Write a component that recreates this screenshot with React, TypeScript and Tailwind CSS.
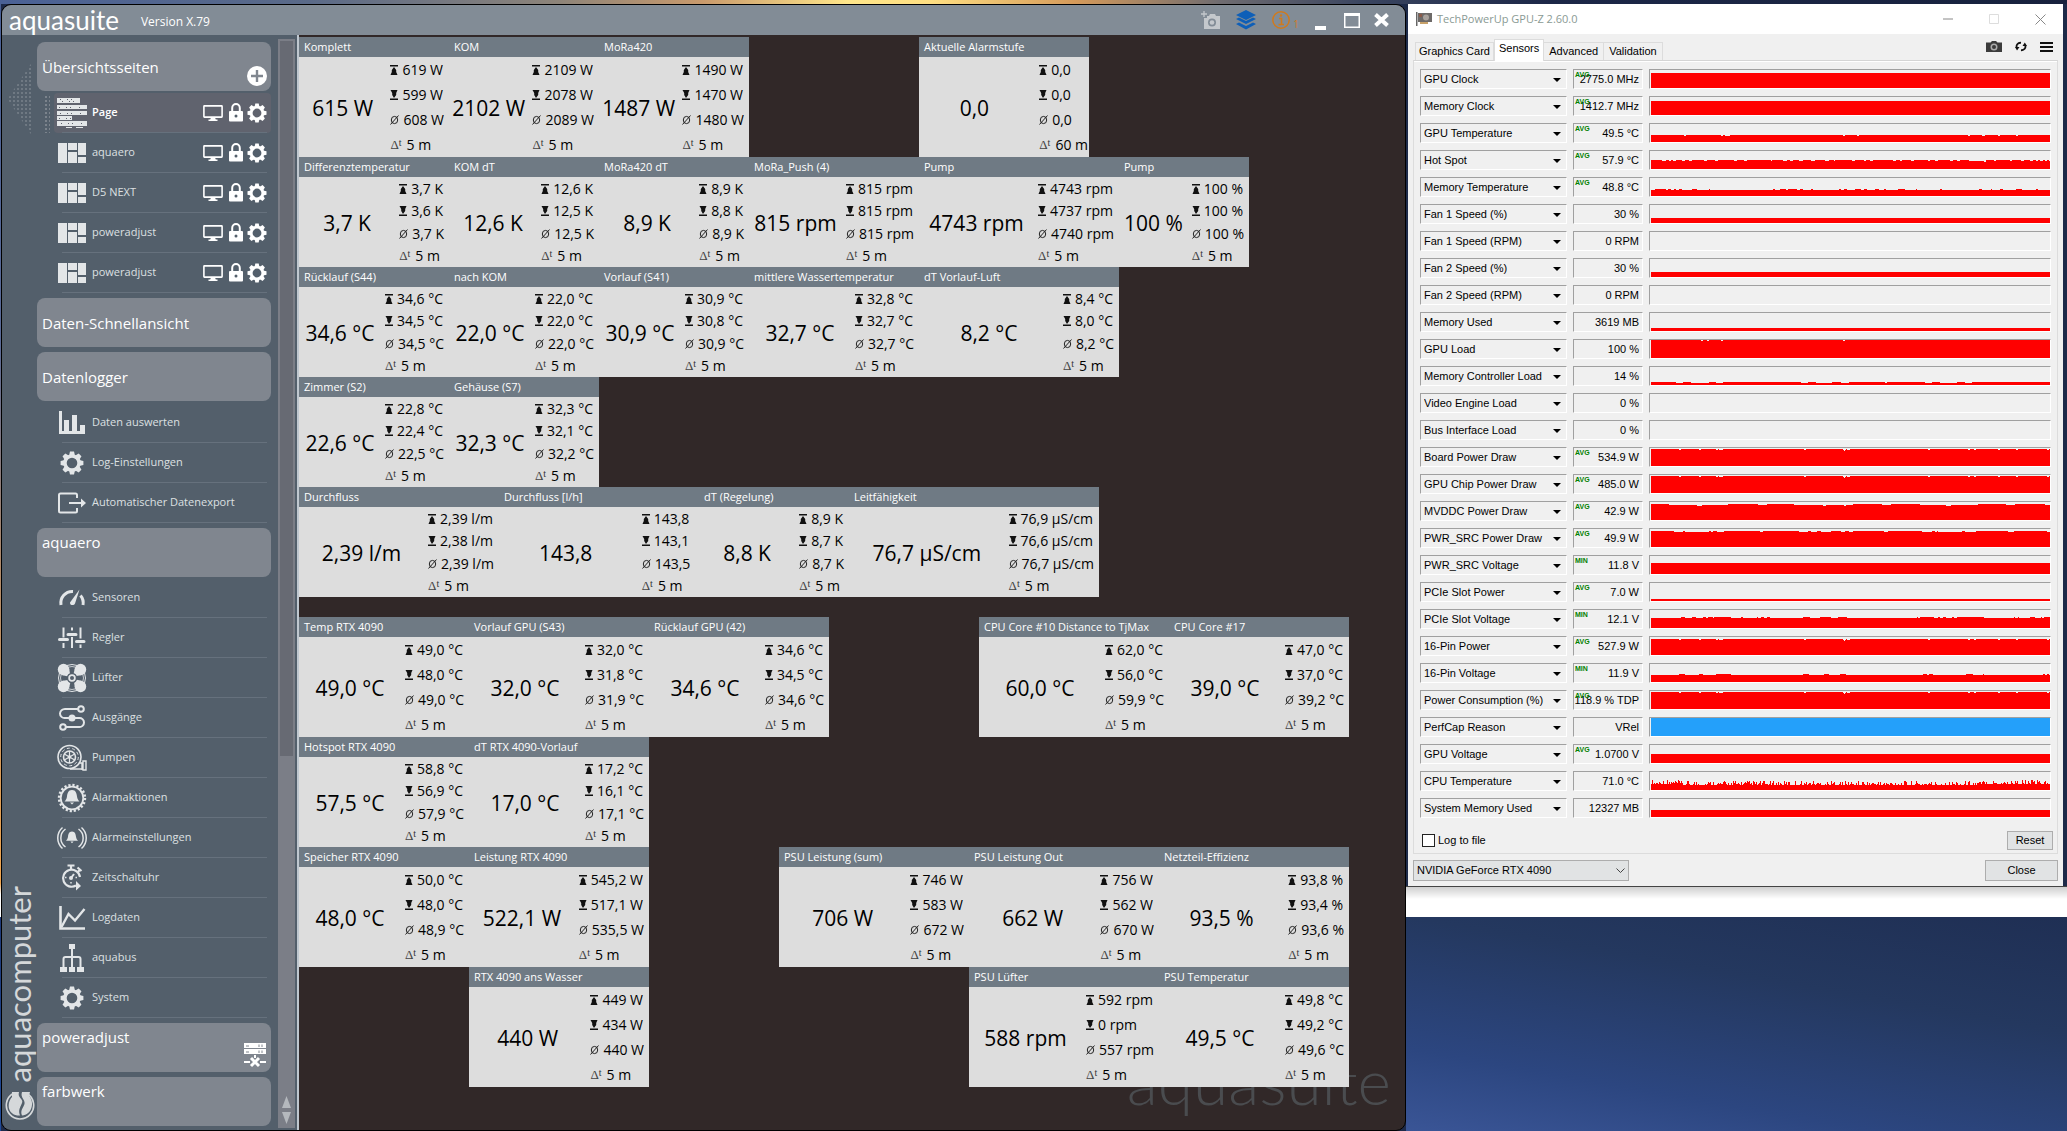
import type { ReactNode } from "react";

type NavEntry = { label: string; icon: ReactNode };

type Tile = {
    title: string;
    value: string;
    max: string;
    min: string;
    avg: string;
    span?: string;
    width: string;
    indent?: string;
};

type Sensor = {
    name: string;
    value: string;
    mode?: "AVG" | "MIN";
    height: number;
    // [x, width, offset] for the spots that differ from the base level
    marks?: [number, number, number][];
    noise?: boolean;
    color?: string;
};

const W2 = "w-[150px]";
const W3 = "w-[170px]";
const W4 = "w-[180px]";
const W5 = "w-[190px]";
const W6 = "w-[200px]";

const rows: { height: string; tiles: Tile[] }[] = [
    {
        height: "h-[100px]",
        tiles: [
            { title: "Komplett", value: "615 W", max: "619 W", min: "599 W", avg: "608 W", width: W2 },
            { title: "KOM", value: "2102 W", max: "2109 W", min: "2078 W", avg: "2089 W", width: W2 },
            { title: "MoRa420", value: "1487 W", max: "1490 W", min: "1470 W", avg: "1480 W", width: W2 },
            { title: "Aktuelle Alarmstufe", value: "0,0 ", max: "0,0 ", min: "0,0 ", avg: "0,0 ", span: "60 m", width: W3, indent: "ml-[170px]" },
        ],
    },
    {
        height: "h-[90px]",
        tiles: [
            { title: "Differenztemperatur", value: "3,7 K", max: "3,7 K", min: "3,6 K", avg: "3,7 K", width: W2 },
            { title: "KOM dT", value: "12,6 K", max: "12,6 K", min: "12,5 K", avg: "12,5 K", width: W2 },
            { title: "MoRa420 dT", value: "8,9 K", max: "8,9 K", min: "8,8 K", avg: "8,9 K", width: W2 },
            { title: "MoRa_Push (4)", value: "815 rpm", max: "815 rpm", min: "815 rpm", avg: "815 rpm", width: W3 },
            { title: "Pump", value: "4743 rpm", max: "4743 rpm", min: "4737 rpm", avg: "4740 rpm", width: W6 },
            { title: "Pump", value: "100 %", max: "100 %", min: "100 %", avg: "100 %", width: "w-[130px]" },
        ],
    },
    {
        height: "h-[90px]",
        tiles: [
            { title: "Rücklauf (S44)", value: "34,6 °C", max: "34,6 °C", min: "34,5 °C", avg: "34,5 °C", width: W2 },
            { title: "nach KOM", value: "22,0 °C", max: "22,0 °C", min: "22,0 °C", avg: "22,0 °C", width: W2 },
            { title: "Vorlauf (S41)", value: "30,9 °C", max: "30,9 °C", min: "30,8 °C", avg: "30,9 °C", width: W2 },
            { title: "mittlere Wassertemperatur", value: "32,7 °C", max: "32,8 °C", min: "32,7 °C", avg: "32,7 °C", width: W3 },
            { title: "dT Vorlauf-Luft", value: "8,2 °C", max: "8,4 °C", min: "8,0 °C", avg: "8,2 °C", width: W6 },
        ],
    },
    {
        height: "h-[90px]",
        tiles: [
            { title: "Zimmer (S2)", value: "22,6 °C", max: "22,8 °C", min: "22,4 °C", avg: "22,5 °C", width: W2 },
            { title: "Gehäuse (S7)", value: "32,3 °C", max: "32,3 °C", min: "32,1 °C", avg: "32,2 °C", width: W2 },
        ],
    },
    {
        height: "h-[90px] mb-5",
        tiles: [
            { title: "Durchfluss", value: "2,39 l/m", max: "2,39 l/m", min: "2,38 l/m", avg: "2,39 l/m", width: W6 },
            { title: "Durchfluss [l/h]", value: "143,8 ", max: "143,8 ", min: "143,1 ", avg: "143,5 ", width: W6 },
            { title: "dT (Regelung)", value: "8,8 K", max: "8,9 K", min: "8,7 K", avg: "8,7 K", width: W2 },
            { title: "Leitfähigkeit", value: "76,7 µS/cm", max: "76,9 µS/cm", min: "76,6 µS/cm", avg: "76,7 µS/cm", width: "w-[250px]" },
        ],
    },
    {
        height: "h-[100px]",
        tiles: [
            { title: "Temp RTX 4090", value: "49,0 °C", max: "49,0 °C", min: "48,0 °C", avg: "49,0 °C", width: W3 },
            { title: "Vorlauf GPU (S43)", value: "32,0 °C", max: "32,0 °C", min: "31,8 °C", avg: "31,9 °C", width: W4 },
            { title: "Rücklauf GPU (42)", value: "34,6 °C", max: "34,6 °C", min: "34,5 °C", avg: "34,6 °C", width: W4 },
            { title: "CPU Core #10 Distance to TjMax", value: "60,0 °C", max: "62,0 °C", min: "56,0 °C", avg: "59,9 °C", width: W5, indent: "ml-[150px]" },
            { title: "CPU Core #17", value: "39,0 °C", max: "47,0 °C", min: "37,0 °C", avg: "39,2 °C", width: W4 },
        ],
    },
    {
        height: "h-[90px]",
        tiles: [
            { title: "Hotspot RTX 4090", value: "57,5 °C", max: "58,8 °C", min: "56,9 °C", avg: "57,9 °C", width: W3 },
            { title: "dT RTX 4090-Vorlauf", value: "17,0 °C", max: "17,2 °C", min: "16,1 °C", avg: "17,1 °C", width: W4 },
        ],
    },
    {
        height: "h-[100px]",
        tiles: [
            { title: "Speicher RTX 4090", value: "48,0 °C", max: "50,0 °C", min: "48,0 °C", avg: "48,9 °C", width: W3 },
            { title: "Leistung RTX 4090", value: "522,1 W", max: "545,2 W", min: "517,1 W", avg: "535,5 W", width: W4 },
            { title: "PSU Leistung (sum)", value: "706 W", max: "746 W", min: "583 W", avg: "672 W", width: W5, indent: "ml-[130px]" },
            { title: "PSU Leistung Out", value: "662 W", max: "756 W", min: "562 W", avg: "670 W", width: W5 },
            { title: "Netzteil-Effizienz", value: "93,5 %", max: "93,8 %", min: "93,4 %", avg: "93,6 %", width: W5 },
        ],
    },
    {
        height: "h-[100px]",
        tiles: [
            { title: "RTX 4090 ans Wasser", value: "440 W", max: "449 W", min: "434 W", avg: "440 W", width: W4, indent: "ml-[170px]" },
            { title: "PSU Lüfter", value: "588 rpm", max: "592 rpm", min: "0 rpm", avg: "557 rpm", width: W5, indent: "ml-[320px]" },
            { title: "PSU Temperatur", value: "49,5 °C", max: "49,8 °C", min: "49,2 °C", avg: "49,6 °C", width: W5 },
        ],
    },
];

const powerDips: [number, number, number][] = [
    [28, 2, -1], [48, 2, -1], [65, 2, -1], [68, 4, -1], [153, 2, -1], [192, 3, -1], [193, 1, -2], [196, 3, -1],
    [278, 2, -1], [318, 2, -1], [324, 2, -1], [348, 2, -1], [366, 2, -1], [397, 2, -1],
];

const sensors: Sensor[] = [
    { name: "GPU Clock", value: "2775.0 MHz", mode: "AVG", height: 15 },
    { name: "Memory Clock", value: "1412.7 MHz", mode: "AVG", height: 14 },
    { name: "GPU Temperature", value: "49.5 °C", mode: "AVG", height: 7, marks: [[33, 2, -1], [70, 2, -1], [74, 5, -1], [192, 2, -1], [207, 2, -1], [318, 2, -1], [332, 3, -1], [348, 2, -1], [366, 2, -1]] },
    { name: "Hot Spot", value: "57.9 °C", mode: "AVG", height: 8, marks: [[0, 11, 1], [15, 3, 1], [20, 2, 1], [25, 6, 1], [34, 4, 1], [41, 12, 1], [56, 8, 1], [67, 16, 1], [86, 7, 1], [96, 2, 1], [98, 22, 1], [121, 11, 1], [136, 3, 1], [142, 6, 1], [152, 8, 1], [164, 10, 1], [178, 5, 1], [184, 18, 1], [205, 9, 1], [216, 4, 1], [223, 20, 1], [246, 4, 1], [252, 9, 1], [264, 14, 1], [280, 5, 1], [288, 12, 1], [303, 4, 1], [310, 9, 1], [334, 2, -1], [336, 8, 1], [346, 14, 1], [362, 9, 1], [374, 6, 1], [383, 3, 1], [388, 2, 1], [393, 2, 1], [397, 2, 1]] },
    { name: "Memory Temperature", value: "48.8 °C", mode: "AVG", height: 6, marks: [[4, 11, 1], [17, 3, 1], [23, 2, 1], [28, 3, 1], [41, 5, 1], [58, 1, 1], [122, 2, 1], [129, 6, 1], [137, 9, 1], [149, 3, 1], [160, 2, 1], [188, 2, 1], [193, 3, 1], [205, 6, 1], [214, 3, 1], [225, 4, 1], [234, 2, 1], [248, 7, 1], [266, 1, 1], [290, 2, 1], [329, 3, 1], [341, 1, 1], [350, 3, 1], [366, 6, 1], [386, 2, 1]] },
    { name: "Fan 1 Speed (%)", value: "30 %", height: 5 },
    { name: "Fan 1 Speed (RPM)", value: "0 RPM", height: 0 },
    { name: "Fan 2 Speed (%)", value: "30 %", height: 5 },
    { name: "Fan 2 Speed (RPM)", value: "0 RPM", height: 0 },
    { name: "Memory Used", value: "3619 MB", height: 3 },
    { name: "GPU Load", value: "100 %", height: 18, marks: [[50, 2, -1], [56, 2, -1], [70, 2, -1], [192, 2, -1]] },
    { name: "Memory Controller Load", value: "14 %", height: 3, marks: [[25, 7, -1], [40, 18, -1], [65, 7, -1], [150, 7, -1], [165, 16, -1], [190, 8, -1], [235, 2, -1], [275, 7, -1], [290, 17, -1], [315, 7, -1]] },
    { name: "Video Engine Load", value: "0 %", height: 0 },
    { name: "Bus Interface Load", value: "0 %", height: 0 },
    { name: "Board Power Draw", value: "534.9 W", mode: "AVG", height: 17, marks: powerDips },
    { name: "GPU Chip Power Draw", value: "485.0 W", mode: "AVG", height: 17, marks: powerDips },
    { name: "MVDDC Power Draw", value: "42.9 W", mode: "AVG", height: 16, marks: [[18, 28, -1], [46, 5, -2], [51, 26, -1], [107, 9, -1], [143, 29, -1], [172, 3, -2], [175, 18, -1], [193, 2, -2], [195, 8, -1], [232, 9, -1], [270, 26, -1], [296, 5, -2], [301, 27, -1], [356, 9, -1], [395, 5, -1]] },
    { name: "PWR_SRC Power Draw", value: "49.9 W", mode: "AVG", height: 16, marks: [[23, 9, -1], [34, 24, -1], [60, 2, -1], [66, 7, -1], [109, 3, -1], [148, 9, -1], [160, 6, -1], [170, 10, -1], [190, 4, -1], [198, 5, -1], [234, 4, -1], [272, 10, -1], [285, 2, -1], [288, 24, -1], [315, 11, -1], [358, 6, -1], [397, 3, -1]] },
    { name: "PWR_SRC Voltage", value: "11.8 V", mode: "MIN", height: 11 },
    { name: "PCIe Slot Power", value: "7.0 W", mode: "AVG", height: 2 },
    { name: "PCIe Slot Voltage", value: "12.1 V", mode: "MIN", height: 10, marks: [[30, 4, 1], [41, 4, 1], [52, 3, 1], [57, 5, 1], [63, 17, 1], [90, 2, 1], [106, 1, 1], [110, 3, 1], [116, 3, 1], [152, 7, 1], [169, 11, 1], [187, 9, 1], [267, 1, 1], [270, 14, 1], [288, 2, 1], [293, 3, 1], [302, 2, 1], [307, 27, 1], [364, 1, 1], [368, 1, 1], [380, 5, 1], [391, 1, 1], [394, 6, 1]] },
    { name: "16-Pin Power", value: "527.9 W", mode: "AVG", height: 16, marks: powerDips },
    { name: "16-Pin Voltage", value: "11.9 V", mode: "MIN", height: 7, marks: [[28, 6, 1], [48, 4, 1], [65, 15, 1], [152, 6, 1], [173, 5, 1], [189, 6, 1], [273, 4, 1], [279, 4, 1], [316, 7, 1], [333, 1, 1], [393, 2, 1], [397, 2, 1]] },
    { name: "Power Consumption (%)", value: "118.9 % TDP", mode: "AVG", height: 17, marks: powerDips },
    { name: "PerfCap Reason", value: "VRel", height: 18, color: "#24a0fa" },
    { name: "GPU Voltage", value: "1.0700 V", mode: "AVG", height: 9 },
    { name: "CPU Temperature", value: "71.0 °C", height: 5, noise: true },
    { name: "System Memory Used", value: "12327 MB", height: 7 },
];

/* ---------- icons ---------- */

const Gear = ({ size, hole = 6 }: { size: number; hole?: number }) => (
    <svg width={size} height={size} viewBox="0 0 24 24" fill="none" stroke="currentColor">
        <circle cx="12" cy="12" r={hole + 1} strokeWidth="3.4" />
        {[0, 45, 90, 135, 180, 225, 270, 315].map((a) => (
            <path key={a} d="M10 0.6 L14 0.6 L15 4.8 L9 4.8 Z" fill="currentColor" stroke="none" transform={`rotate(${a} 12 12)`} />
        ))}
    </svg>
);

const Icon = ({ children }: { children: ReactNode }) => (
    <svg width="30" height="30" viewBox="0 0 30 30" fill="none" stroke="currentColor" strokeWidth="2">
        {children}
    </svg>
);

const LayoutIcon = () => (
    <Icon>
        <path d="M1 5h9v20H1zM11 5h9v7h-9zM11 14h9v11h-9zM21 5h8v12h-8zM21 19h8v6h-8z" fill="currentColor" stroke="none" />
    </Icon>
);

const PageIcon = () => (
    <Icon>
        <path d="M0 0h23v5H0zM0 7h30v4H0zM0 13h30v4H0zM0 18h15v4H0zM0 23h30v5H0zM9 29h6v1H9zM19 29h7v1h-7z" fill="currentColor" stroke="none" />
        <path d="M3 1.500h18M5 3.500h16M2 9.500h26M3 15.500h25M2 20.500h12M4 25.500h24" stroke="#60636e" strokeWidth="1" strokeDasharray="1 6 1 3 1 8" />
    </Icon>
);

const bell = "M15 7c-4 0-4.600 3.500-5 6.500-.3 2.500-1.500 4-2.500 5h15c-1-1-2.200-2.500-2.500-5-.4-3-1-6.500-5-6.500zM13 19.500h4l-2 2z";

const ChartBarsIcon = () => (
    <Icon>
        <path d="M2 3h3v20h2V12h5v11h3V7h5v16h3v-6h5v9H2z" fill="currentColor" stroke="none" />
    </Icon>
);
const ExportIcon = () => (
    <Icon>
        <path d="M20 10V7a1.500 1.500 0 0 0-1.500-1.500h-15A1.500 1.500 0 0 0 2 7v16a1.500 1.500 0 0 0 1.500 1.500h15A1.500 1.500 0 0 0 20 23v-3" />
        <path d="M12 15h13" />
        <path d="M24 10.500l5 4.500-5 4.500z" fill="currentColor" stroke="none" />
    </Icon>
);
const GaugeIcon = () => (
    <Icon>
        <path d="M4 22a11.500 11.500 0 0 1 12-13.500M23.500 12.500A11.500 11.500 0 0 1 26 22" strokeWidth="3" />
        <path d="M22.500 6.500l-4.500 14c-1 2.500-5.500 2-5-1z" fill="currentColor" stroke="none" />
    </Icon>
);
const SlidersIcon = () => (
    <Icon>
        <path d="M6.500 4.500v10M6.500 20v5M15 4.500v3M15 14v11M23.500 4.500v11M23.500 21.500v3.500" />
        <path d="M2.500 16.500h8M11 11.500h8M19.500 18.500h7.500" strokeWidth="3" strokeLinecap="round" />
    </Icon>
);
const FanIcon = () => (
    <Icon>
        <circle cx="15" cy="15" r="13.500" strokeWidth="1" />
        <circle cx="15" cy="15" r="11.500" strokeWidth="0.800" />
        {[0, 90, 180, 270].map((a) => (
            <g key={a} fill="currentColor" stroke="none" transform={`rotate(${a} 15 15)`}>
                <circle cx="6.500" cy="6.500" r="5.700" />
                <path d="M12 4.500L13.500 14 4.500 12z" />
            </g>
        ))}
        <circle cx="15" cy="15" r="4.500" fill="currentColor" stroke="#535f6b" strokeWidth="1.500" />
        <circle cx="15" cy="15" r="2" fill="#535f6b" stroke="none" />
    </Icon>
);
const OutputsIcon = () => (
    <Icon>
        <path d="M21 6H8a5 5 0 0 0-5 4.500 4.500 4.500 0 0 0 5 4.500h14a4.500 4.500 0 0 1 5 4.500 4.500 4.500 0 0 1-5 4.500H9" />
        <circle cx="24" cy="6" r="2.800" />
        <circle cx="6" cy="24" r="2.800" />
        <circle cx="15" cy="15" r="3.500" fill="currentColor" stroke="none" />
    </Icon>
);
const PumpIcon = () => (
    <Icon>
        <circle cx="12.500" cy="14" r="11.500" strokeWidth="1.600" />
        <circle cx="12.500" cy="14" r="8.800" strokeWidth="1" strokeDasharray="3 2.500" />
        <circle cx="12.500" cy="14" r="6" strokeWidth="1.600" />
        <path d="M12.500 8v12M7.300 11l10.400 6M7.300 17l10.400-6" strokeWidth="1.200" />
        <circle cx="12.500" cy="14" r="1.800" fill="currentColor" stroke="none" />
        <path d="M13 26h12M23 20h2v7M26 18h3v9h-3z" strokeWidth="1.400" />
    </Icon>
);
const AlarmGearIcon = () => (
    <Icon>
        <circle cx="15" cy="15" r="13" strokeWidth="2.400" strokeDasharray="2.200 1.884" />
        <circle cx="15" cy="15" r="11.300" strokeWidth="1.800" />
        <path d={bell} fill="currentColor" stroke="none" />
    </Icon>
);
const AlarmIcon = () => (
    <Icon>
        <path d={bell} fill="currentColor" stroke="none" transform="translate(3 3) scale(.8)" />
        <path d="M8.500 6a11 11 0 0 0 0 18M5.500 4.500a14 14 0 0 0 0 21M21.500 6a11 11 0 0 1 0 18M24.500 4.500a14 14 0 0 1 0 21" strokeWidth="1.500" />
    </Icon>
);
const TimerIcon = () => (
    <Icon>
        <path d="M19 22.500a8.500 8.500 0 1 1 4-8.500" strokeWidth="2.200" />
        <path d="M10.500 2.500h7M14 3v3M20.500 4.500l4 3.500M21 9l2-2.500" strokeWidth="2.200" />
        <path d="M14 15l3-4" />
        <circle cx="14" cy="15" r="2" fill="currentColor" stroke="none" />
        <path d="M8 14.500h1.500M14 20.500V19M18.500 14.500H20" strokeWidth="1.500" />
        <path d="M19 18l5 5-5 4.500z" fill="currentColor" stroke="none" />
    </Icon>
);
const LineChartIcon = () => (
    <Icon>
        <path d="M3.500 3v22.500H28" strokeWidth="2.600" />
        <path d="M4.500 24l7-13 6.500 6.500 9.500-11.500" strokeWidth="2.400" />
    </Icon>
);
const BusIcon = () => (
    <Icon>
        <path d="M12 1h6v5h-6zM3 24h7v5H3zM12 24h6v5h-6zM20 24h7v5h-7z" fill="currentColor" stroke="none" />
        <path d="M15 5v19M6.500 24v-8q0-2 2-2h13q2 0 2 2v8" />
    </Icon>
);
const CogIcon = () => (
    <span className="flex size-[30px] items-center justify-center"><Gear size={24} hole={6} /></span>
);

const MonitorIcon = () => (
    <svg width="20" height="18" viewBox="0 0 20 18" fill="none" stroke="#fff">
        <rect x="0.900" y="1.900" width="18.200" height="11.200" strokeWidth="1.600" rx="0.500" />
        <path d="M8 13.500h4l.8 2h1.700v1.500H5.500v-1.500h1.700z" fill="#fff" stroke="none" />
    </svg>
);
const LockIcon = () => (
    <svg width="14" height="19" viewBox="0 0 14 19">
        <path d="M3.200 8V5a3.800 4 0 0 1 7.600 0v3" fill="none" stroke="#fff" strokeWidth="2" />
        <rect x="0" y="8" width="14" height="10.500" rx="1" fill="#fff" />
        <circle cx="7" cy="13" r="1.500" fill="#535f6b" />
    </svg>
);

const MaxIcon = () => (
    <svg width="8" height="10" viewBox="0 0 8 10"><path d="M0 0h8v1.500H0zM4 2l2.200 3v2l1.300 3H.5l1.300-3V5z" fill="#111" /></svg>
);
const MinIcon = () => (
    <svg width="8" height="10" viewBox="0 0 8 10"><path d="M0 8.500h8V10H0zM4 8L2.200 5V3L.5 0h7L6.200 3v2z" fill="#111" /></svg>
);
const AvgIcon = () => (
    <svg width="9" height="10" viewBox="0 0 9 10" fill="none" stroke="#222"><ellipse cx="4.500" cy="5" rx="3.200" ry="3.600" /><path d="M.5 9.500L8.500.5" /></svg>
);

/* ---------- aquasuite ---------- */

const NavHeader = ({ label, top = false, children }: { label: string; top?: boolean; children?: ReactNode }) => (
    <div className={`flex h-[49px] justify-between rounded-lg bg-[#80868f] px-[5px] ${top ? "items-start pt-1" : "items-center"}`}>
        <a href="#" className="text-[15px] leading-5 text-white">{label}</a>
        {children}
    </div>
);

const NavItem = ({ entry, tools = false, active = false }: { entry: NavEntry; tools?: boolean; active?: boolean }) => (
    <li className="flex h-10 pl-[7px]">
        {active && (
            <span className="mt-0.5 h-[38px] w-1.5 bg-[radial-gradient(#7b838c_1px,transparent_1px)] bg-[size:4px_4px]" />
        )}
        <div className={`flex flex-1 flex-col pl-[3px] ${active ? "ml-1 rounded bg-[#60636e]" : "ml-[10px]"}`}>
            <div className="flex flex-1 items-center pr-1 text-[#e3e6e8]">
                {entry.icon}
                <a href="#" className={`ml-[5px] flex-1 text-[11px] ${active ? "font-semibold text-white" : "text-[#dde0e2]"}`}>{entry.label}</a>
                {tools && (
                    <span className="flex items-center text-white">
                        <button type="button" aria-label="Anzeigen" className="mr-1.5"><MonitorIcon /></button>
                        <button type="button" aria-label="Sperren" className="mr-1"><LockIcon /></button>
                        <button type="button" aria-label="Einstellungen"><Gear size={20} /></button>
                    </span>
                )}
            </div>
            <div className="mr-1 ml-[5px] h-px bg-[#66717d]" />
        </div>
    </li>
);

const pages: NavEntry[] = [
    { label: "Page", icon: <PageIcon /> },
    { label: "aquaero", icon: <LayoutIcon /> },
    { label: "D5 NEXT", icon: <LayoutIcon /> },
    { label: "poweradjust", icon: <LayoutIcon /> },
    { label: "poweradjust", icon: <LayoutIcon /> },
];

const logEntries: NavEntry[] = [
    { label: "Daten auswerten", icon: <ChartBarsIcon /> },
    { label: "Log-Einstellungen", icon: <CogIcon /> },
    { label: "Automatischer Datenexport", icon: <ExportIcon /> },
];

const deviceEntries: NavEntry[] = [
    { label: "Sensoren", icon: <GaugeIcon /> },
    { label: "Regler", icon: <SlidersIcon /> },
    { label: "Lüfter", icon: <FanIcon /> },
    { label: "Ausgänge", icon: <OutputsIcon /> },
    { label: "Pumpen", icon: <PumpIcon /> },
    { label: "Alarmaktionen", icon: <AlarmGearIcon /> },
    { label: "Alarmeinstellungen", icon: <AlarmIcon /> },
    { label: "Zeitschaltuhr", icon: <TimerIcon /> },
    { label: "Logdaten", icon: <LineChartIcon /> },
    { label: "aquabus", icon: <BusIcon /> },
    { label: "System", icon: <CogIcon /> },
];

const Sidebar = () => (
    <aside className="flex w-[295px] shrink-0 bg-[#535f6b]">
        {/* brand strip */}
        <div className="flex w-[35px] flex-col items-center justify-between pt-7 pb-[10px]">
            <div className="h-[72px] w-6 bg-[radial-gradient(#6f7983_1px,transparent_1px)] bg-[size:4px_4px] [clip-path:polygon(100%_0,100%_100%,0_50%)]" />
            <div className="flex flex-col items-center gap-2">
                <span className="rotate-180 font-[Lato] text-[31px] leading-[35px] text-[#d5d8da] [writing-mode:vertical-rl]">aquacomputer</span>
                <svg width="30" height="30" viewBox="0 0 30 30">
                    <path d="M8 3.500A13.700 13.700 0 1 0 22 3.500" fill="none" stroke="#d5d8da" strokeWidth="1.600" />
                    <path d="M7 2h7c-2 6 5 7 3 11-2 5-4 7-2 12.500C3 26 1 14 7 7z" fill="#d5d8da" />
                    <path d="M17 2h8l-1 4c6 6 3 19-7 19.500-2-5 1-7 2.500-11.500C20.500 9.500 15 8 17 2z" fill="#d5d8da" />
                </svg>
            </div>
        </div>

        <nav className="flex w-[234px] flex-col gap-[5px] pt-[7px]">
            <section>
                <NavHeader label="Übersichtsseiten">
                    <button type="button" aria-label="Seite hinzufügen" className="mt-auto mr-[-1px] mb-[5px]">
                        <svg width="20" height="20" viewBox="0 0 20 20"><circle cx="10" cy="10" r="10" fill="#fff" /><path d="M10 4v12M4 10h12" stroke="#80868f" strokeWidth="2.400" /></svg>
                    </button>
                </NavHeader>
                <ul className="pt-0.5">
                    {pages.map((entry, i) => <NavItem key={i} entry={entry} tools active={i === 0} />)}
                </ul>
            </section>
            <NavHeader label="Daten-Schnellansicht" />
            <section>
                <NavHeader label="Datenlogger" />
                <ul className="pt-0.5">
                    {logEntries.map((entry) => <NavItem key={entry.label} entry={entry} />)}
                </ul>
            </section>
            <section>
                <NavHeader label="aquaero" top />
                <ul className="pt-px">
                    {deviceEntries.map((entry) => <NavItem key={entry.label} entry={entry} />)}
                </ul>
            </section>
            <NavHeader label="poweradjust" top>
                <svg width="22" height="25" viewBox="0 0 22 25" className="mt-4">
                    <path d="M0 0h22v5H0zM0 6h22v5H0zM0 18h6v2H0zM16 18h6v2h-6zM10 12h2v3h-2z" fill="#fff" />
                    <path d="M7 15l8 8M15 15l-8 8" stroke="#fff" strokeWidth="3" />
                    <path d="M2 3h3M15 1.500v2.500M18 1.500v2.500M2 9h3M15 7.500v2.500M18 7.500v2.500" stroke="#80868f" />
                </svg>
            </NavHeader>
            <NavHeader label="farbwerk" top />
        </nav>

        {/* scrollbar */}
        <div className="mt-1 mb-0.5 ml-[7px] flex w-[17px] flex-col justify-between bg-[#7b7e87] px-0.5 pt-0.5 pb-1">
            <div className="h-[66%] bg-[#676a73]" />
            <div className="flex flex-col items-center gap-1">
                <svg width="9" height="12" viewBox="0 0 9 12"><path d="M4.500 0L9 12H0z" fill="#b4b8bd" /></svg>
                <svg width="9" height="12" viewBox="0 0 9 12"><path d="M4.500 12L9 0H0z" fill="#b4b8bd" /></svg>
            </div>
        </div>
    </aside>
);

const Stat = ({ icon, text }: { icon: ReactNode; text: string }) => (
    <div className="mr-1 flex flex-1 items-center gap-1 whitespace-pre">{icon}{text}</div>
);

const TileBox = ({ tile, height }: { tile: Tile; height: string }) => (
    <div className={`${tile.width} ${tile.indent ?? ""} shrink-0`}>
        <h2 className="h-5 bg-[#6f7a84] pl-[5px] text-[11px] leading-5 whitespace-nowrap text-white">{tile.title}</h2>
        <div className={`flex bg-[#dddddd] text-black ${height}`}>
            <div className="flex flex-1 items-center justify-center pt-1 pr-1 text-[21px] whitespace-pre">{tile.value}</div>
            <div className="flex flex-col pt-px pr-px text-sm leading-5">
                <Stat icon={<MaxIcon />} text={tile.max} />
                <Stat icon={<MinIcon />} text={tile.min} />
                <Stat icon={<AvgIcon />} text={tile.avg} />
                <div className="flex flex-1 items-center whitespace-nowrap">
                    <span className="font-[Liberation_Serif] text-[13px] text-[#444]">Δ</span>
                    <span className="mb-1 mr-[5px] font-[Liberation_Serif] text-[10px] leading-3 text-[#333]">t</span>
                    {tile.span ?? "5 m"}
                </div>
            </div>
        </div>
    </div>
);

const Aquasuite = () => (
    <main className="flex min-w-0 flex-1 flex-col overflow-hidden rounded-[10px] border border-black bg-[#312828] font-['Open_Sans',sans-serif]">
        <header className="flex h-[30px] shrink-0 items-center bg-[#828c96] pr-4 pl-[7px] text-white">
            <h1 className="font-[Lato] text-[26px] leading-[30px]">aquasuite</h1>
            <span className="ml-[22px] flex-1 pt-1 text-xs leading-5">Version X.79</span>
            <button type="button" aria-label="Screenshot">
                <svg width="19" height="18" viewBox="0 0 19 18"><path d="M3 0v6M0 3h6" stroke="#c4c8cc" strokeWidth="1.300" /><path d="M8 5l1-2h5l1 2h4v13H3V7h3V5z" fill="#c4c8cc" /><circle cx="11" cy="11.500" r="4" fill="#828c96" /><circle cx="11" cy="11.500" r="2.300" fill="#c4c8cc" /></svg>
            </button>
            <button type="button" aria-label="Ebenen" className="ml-4">
                <svg width="20" height="20" viewBox="0 0 20 20" fill="#0e5fb8"><path d="M10 0l10 5-10 5L0 5zM0 9l3-1.500 7 3.500 7-3.500L20 9l-10 5zM0 14l3-1.500 7 3.500 7-3.500 3 1.500-10 5.500z" /></svg>
            </button>
            <button type="button" aria-label="Info" className="ml-4 flex items-end gap-[3px] text-[10px] leading-3 text-[#d07a1c]">
                <svg width="18" height="20" viewBox="0 0 18 20" fill="none" stroke="#d07a1c"><circle cx="9" cy="10" r="8.200" strokeWidth="1.500" /><path d="M7 8.500h2.500V14M6.500 14.500h5.500" strokeWidth="1.600" /><circle cx="9" cy="5.500" r="1.200" fill="#d07a1c" stroke="none" /></svg>
                1
            </button>
            <button type="button" aria-label="Minimieren" className="ml-4 pt-4"><svg width="11" height="4"><path d="M0 0h11v4H0z" fill="#fff" /></svg></button>
            <button type="button" aria-label="Maximieren" className="ml-[18px]"><svg width="16" height="15"><path d="M0 0h16v15H0zM1.500 3v10.500h13V3z" fill="#fff" fillRule="evenodd" /></svg></button>
            <button type="button" aria-label="Schließen" className="ml-[14px]"><svg width="15" height="14" viewBox="0 0 15 14"><path d="M1.500 1.500l12 11M13.500 1.500l-12 11" stroke="#fff" strokeWidth="4" /></svg></button>
        </header>
        <div className="flex min-h-0 flex-1">
            <Sidebar />
            <div className="relative min-w-0 flex-1 border-l-2 border-[#bfc7cf] pt-0.5">
                <span className="absolute right-[14px] bottom-[17px] font-[Lato] text-[64px] leading-[64px] font-light text-[#4a4c4f]">aquasuite</span>
                <div className="relative">
                    {rows.map((row, i) => (
                        <div key={i} className="flex">
                            {row.tiles.map((tile, j) => <TileBox key={j} tile={tile} height={row.height} />)}
                        </div>
                    ))}
                </div>
            </div>
        </div>
    </main>
);

/* ---------- GPU-Z ---------- */

// stable pseudo random levels for the CPU temperature history
const noiseLevels = Array.from({ length: 400 }, (_, i) => {
    const r = Math.abs(Math.sin(i * 12.9898) * 43758.5453) % 1;
    const edge = i < 30 || i > 330 ? 1 : 0;
    return 5 + edge + Math.floor(r * r * 5);
});

const History = ({ sensor }: { sensor: Sensor }) => (
    <svg className="block h-[18px] w-full" viewBox="0 0 400 18" preserveAspectRatio="none" shapeRendering="crispEdges" fill={sensor.color ?? "#ff0000"}>
        <rect x="0" y={18 - sensor.height} width="400" height={sensor.height} />
        {sensor.marks?.map(([x, w, d], i) => (
            <rect key={i} x={x} width={w} y={18 - sensor.height - Math.max(d, 0)} height={Math.abs(d)} fill={d < 0 ? "#f0f0f0" : "#ff0000"} />
        ))}
        {sensor.noise && noiseLevels.map((h, i) => <rect key={i} x={i} y={18 - h} width="1" height={h} />)}
    </svg>
);

const sunken = "h-5 border border-t-[#a0a0a0] border-r-white border-b-white border-l-[#a0a0a0]";
const tab = "border border-b-0 border-[#dcdcdc]";

const GpuZ = () => (
    <section className="mr-1 ml-0.5 bg-[#f0f0f0] font-['Liberation_Sans',Arial,sans-serif] text-[11px] text-black">
        <header className="flex h-[30px] items-center bg-white pr-[17px] pl-2">
            <svg width="16" height="14" viewBox="0 0 16 14"><path d="M0 0h1.500v14H0z" fill="#666" /><path d="M2 1h14v9H2z" fill="#6d6a68" /><circle cx="10" cy="5.500" r="3" fill="#a9a29c" /><path d="M3 2h3v3H3z" fill="#8b5a48" /><path d="M4 10h8v2H4z" fill="#c8a26a" /></svg>
            <h1 className="ml-[5px] flex-1 font-['Open_Sans',sans-serif] text-[11px] text-[#8a9a94]">TechPowerUp GPU-Z 2.60.0</h1>
            <button type="button" aria-label="Minimize"><svg width="10" height="10"><path d="M0 5h10" stroke="#888" /></svg></button>
            <button type="button" aria-label="Maximize" className="ml-9"><svg width="10" height="10"><path d="M.5.5h9v9h-9z" fill="none" stroke="#ddd" /></svg></button>
            <button type="button" aria-label="Close window" className="ml-9"><svg width="11" height="11"><path d="M.5.5l10 10M10.500.5l-10 10" stroke="#888" fill="none" /></svg></button>
        </header>

        <div className="px-[5px] pt-[5px]">
            <div className="flex items-end justify-between">
                <div role="tablist" className="flex items-end pl-0.5">
                    <button type="button" role="tab" aria-selected="false" className={`${tab} h-[18px] px-[3px]`}>Graphics Card</button>
                    <button type="button" role="tab" aria-selected="true" className={`${tab} relative z-10 -mb-px h-[22px] bg-white px-1 pb-1`}>Sensors</button>
                    <button type="button" role="tab" aria-selected="false" className={`${tab} h-[18px] border-l-0 px-[5px]`}>Advanced</button>
                    <button type="button" role="tab" aria-selected="false" className={`${tab} h-[18px] border-l-0 px-[5px]`}>Validation</button>
                </div>
                <div className="mb-[8px] flex items-center gap-[13px] pr-[5px]">
                    <button type="button" aria-label="Screenshot"><svg width="16" height="11" viewBox="0 0 16 11"><path d="M0 1.500h4.500L6 0h4l1.500 1.500H16V11H0z" fill="#3b3b3b" /><circle cx="8" cy="6" r="3.500" fill="#aaa" /><circle cx="8" cy="6" r="2" fill="#3b3b3b" /></svg></button>
                    <button type="button" aria-label="Refresh"><svg width="12" height="11" viewBox="0 0 12 11" fill="none" stroke="#111" strokeWidth="1.800"><path d="M2 7.500C.5 4 3 1.500 6 1.800M10 3.500c1.500 3.500-1 6-4 5.700" /><path d="M0 6h4.500L2 9.500zM7.500 5H12L9.800 1.500z" fill="#111" stroke="none" /></svg></button>
                    <button type="button" aria-label="Menu"><svg width="13" height="10"><path d="M0 1h13M0 5h13M0 9h13" stroke="#111" strokeWidth="2" /></svg></button>
                </div>
            </div>

            <div className="border border-[#dcdcdc] border-t-[#d5d5d5] pt-px shadow-[inset_0_1px_0_#fff]">
                <table className="w-full table-fixed border-separate border-spacing-x-[6px] border-spacing-y-[7px]">
                    <colgroup>
                        <col className="w-[147px]" />
                        <col className="w-[70px]" />
                        <col />
                    </colgroup>
                    <tbody>
                        {sensors.map((sensor) => (
                            <tr key={sensor.name}>
                                <th className="p-0 font-normal">
                                    <div className={`${sunken} relative`}>
                                        <select aria-label={sensor.name} className="block h-[18px] w-full appearance-none bg-transparent pl-[3px]">
                                            <option>{sensor.name}</option>
                                        </select>
                                        <svg width="8" height="4" viewBox="0 0 8 4" className="pointer-events-none absolute top-2 right-[5px]"><path d="M0 0h8L4 4z" fill="#000" /></svg>
                                    </div>
                                </th>
                                <td className="p-0">
                                    <div className={`${sunken} relative pr-[3px] text-right leading-[18px] whitespace-nowrap`}>
                                        {sensor.value}
                                        {sensor.mode && <span className="absolute top-px left-px text-[7px] leading-[7px] font-bold text-[#008000]">{sensor.mode}</span>}
                                    </div>
                                </td>
                                <td className="p-0">
                                    <div className={`${sunken} pl-px`}><History sensor={sensor} /></div>
                                </td>
                            </tr>
                        ))}
                    </tbody>
                </table>
                <div className="flex items-center justify-between pt-[6px] pr-1 pb-[3px] pl-2">
                    <label className="flex items-center gap-[3px]">
                        <input type="checkbox" className="size-[13px] appearance-none border border-[#222] bg-white" />
                        Log to file
                    </label>
                    <button type="button" className="h-[19px] w-[46px] border border-[#adadad] bg-[#e1e3e4]">Reset</button>
                </div>
            </div>
        </div>

        <footer className="flex items-center justify-between px-[5px] pt-[6px] pb-[5px]">
            <div className="relative">
                <select aria-label="Graphics card" className="block h-[21px] w-[216px] appearance-none border border-[#adadad] bg-[#e1e3e4] pl-[3px]">
                    <option>NVIDIA GeForce RTX 4090</option>
                </select>
                <svg width="9" height="6" viewBox="0 0 9 6" className="pointer-events-none absolute top-2 right-1"><path d="M.5.5l4 4 4-4" fill="none" stroke="#444" /></svg>
            </div>
            <button type="button" className="h-[21px] w-[73px] border border-[#adadad] bg-[#e1e3e4]">Close</button>
        </footer>
    </section>
);

const App = () => (
    <div className="flex h-screen flex-col overflow-hidden bg-[#1d2a49]">
        <div className="h-1 shrink-0 bg-[linear-gradient(90deg,#4a6196_0%,#5a6a88_15%,#8d8479_27%,#c99a6c_34%,#ffe68a_41%,#ffdf82_45%,#d59a5a_52%,#6f6c70_59%,#3a4560_66%,#1c2747_75%,#17213d_100%)]" />
        <div className="flex min-h-0 flex-1">
            <div className="w-px bg-[linear-gradient(#4a6196_0%,#5a6a96_30%,#b08a6a_50%,#f0a54f_78%,#ffffff_79%,#ffffff_81%,#1f3a78_81%,#1f4a98_100%)]" />
            <Aquasuite />
            <div className="flex w-[661px] shrink-0 flex-col">
                <GpuZ />
                <div className="h-[31px] shrink-0 border-t border-[#444] bg-[linear-gradient(#cfcfcf,#ffffff_40%)]" />
                <div className="flex-1 bg-[linear-gradient(190deg,#1f2f54_0%,#24385f_35%,#2c4680_75%,#3a5596_100%)]" />
            </div>
        </div>
    </div>
);

export default App;
